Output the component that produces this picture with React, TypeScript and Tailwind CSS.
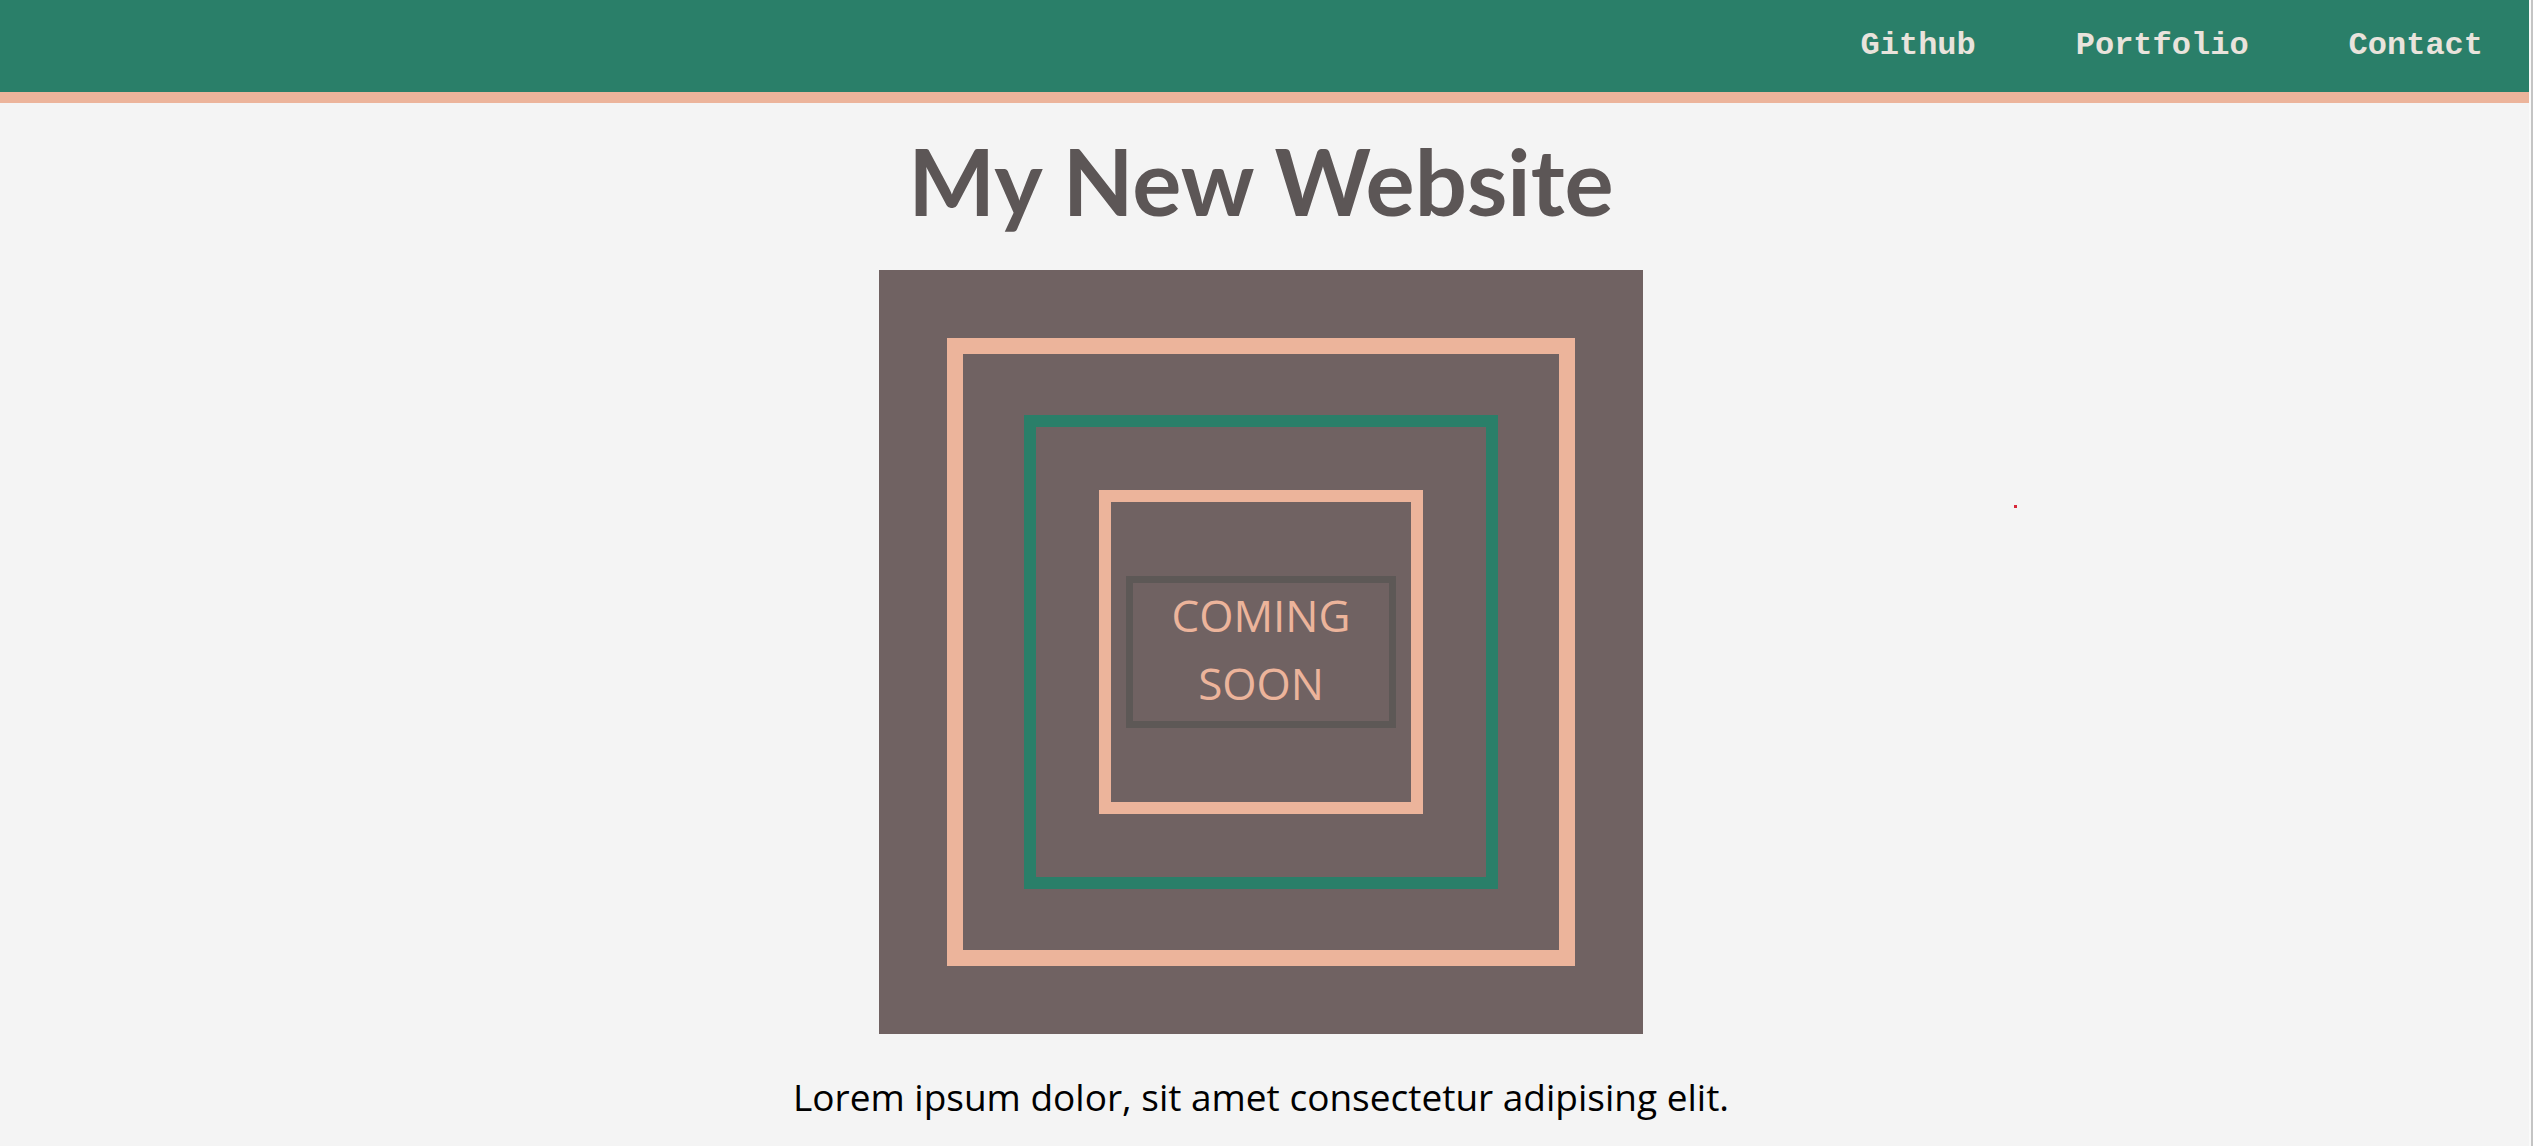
import React from "react";

const navLinks = ["Github", "Portfolio", "Contact"];

export default function App() {
  return (
    <div className="flex min-h-[1146px] w-full bg-[#f4f4f4]">
      <div className="relative flex-1">
        <header className="flex h-[103px] items-center justify-end border-b-[11px] border-[#ecb49b] bg-[#2a7f69] pr-[46px]">
          <nav className="flex items-center gap-[100px]">
            {navLinks.map((link) => (
              <a
                key={link}
                href="#"
                className="text-[32px] font-bold leading-none text-[#e9e3dc]"
                style={{ fontFamily: '"Liberation Mono", "Courier New", monospace' }}
              >
                {link}
              </a>
            ))}
          </nav>
        </header>

        <main className="flex flex-col items-center pr-[7px]">
          <h1
            className="mt-[32px] text-[92px] font-bold leading-none text-[#5c5656]"
            style={{ fontFamily: "Lato, 'Open Sans', sans-serif" }}
          >
            My New Website
          </h1>

          <div className="mt-[43px] flex h-[764px] w-[764px] items-center justify-center bg-[#706262]">
            <div className="flex h-[628px] w-[628px] items-center justify-center border-[16px] border-[#ecb49b]">
              <div className="flex h-[474px] w-[474px] items-center justify-center border-[12px] border-[#2a7f69]">
                <div className="flex h-[324px] w-[324px] items-center justify-center border-[12px] border-[#ecb49b]">
                  <div
                    className="flex h-[152px] w-[270px] flex-col items-center justify-center border-[7px] border-[#5d5856] pb-[6px] text-center text-[44px] leading-[68px] text-[#ecb49b]"
                    style={{ fontFamily: "'Open Sans', sans-serif" }}
                  >
                    <span>COMING</span>
                    <span>SOON</span>
                  </div>
                </div>
              </div>
            </div>
          </div>

          <p
            className="mt-[44px] text-[37px] leading-none text-black"
            style={{ fontFamily: "'Open Sans', sans-serif" }}
          >
            Lorem ipsum dolor, sit amet consectetur adipising elit.
          </p>
        </main>

        <span className="absolute left-[2014px] top-[505px] h-[3px] w-[3px] bg-[#d8283a]" />
      </div>
      <div className="w-[2px] bg-[#fafafa]" />
      <div className="w-[2px] bg-[#c4c4c4]" />
    </div>
  );
}
